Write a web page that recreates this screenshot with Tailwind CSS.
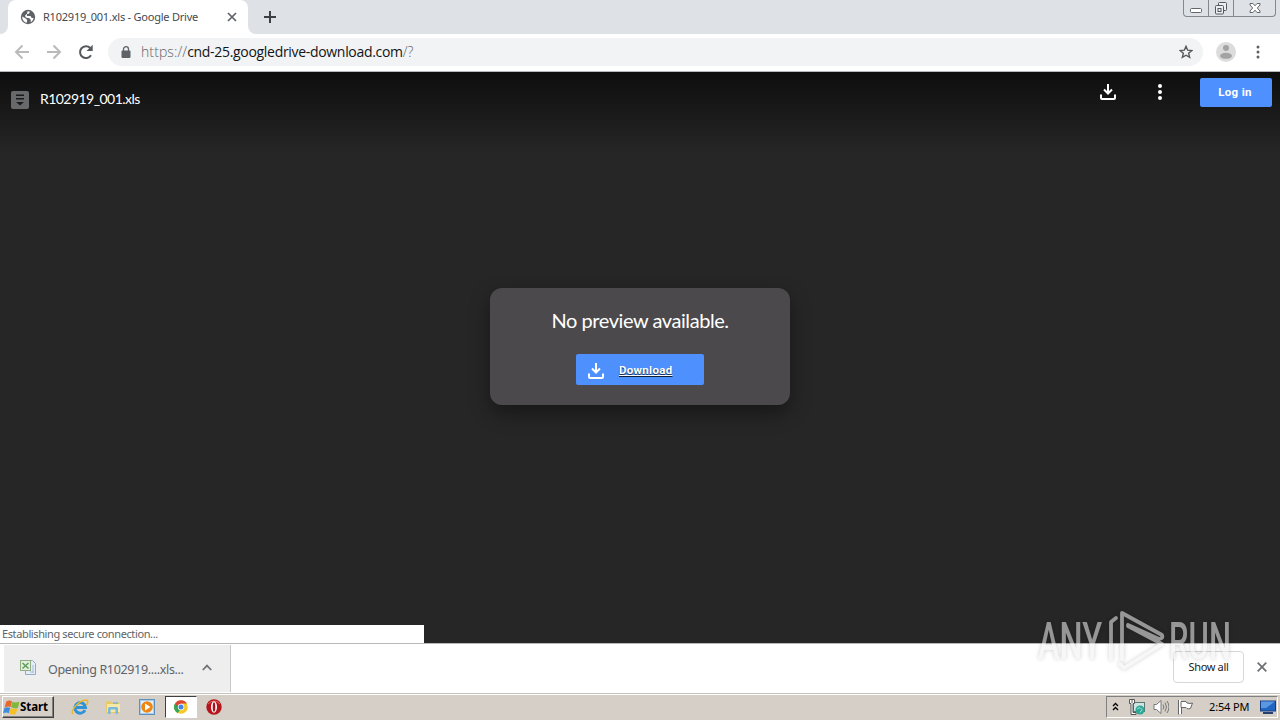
<!DOCTYPE html>
<html lang="en">
<head>
  <meta charset="UTF-8">
  <meta name="viewport" content="width=device-width, initial-scale=1.0">
  <title>R102919_001.xls - Google Drive</title>
  <script src="https://cdn.jsdelivr.net/npm/@tailwindcss/browser@4"></script>
</head>
<body class="relative w-[1280px] h-[720px] overflow-hidden flex flex-col bg-white font-['Noto_Sans',sans-serif] whitespace-nowrap">
  <!-- Tab strip -->
  <header class="h-[34px] bg-[#dee1e6] flex items-start">
    <div class="w-2 h-[34px] bg-white"><div class="h-full bg-[#dee1e6] rounded-br-lg"></div></div>
    <div class="w-60 h-[34px] bg-white rounded-t-lg flex items-center pl-3 pr-[11px]">
      <svg class="w-4 h-4" viewBox="0 0 16 16">
        <circle cx="8" cy="8" r="7.2" fill="#5f6368"/>
        <path d="M2.3 7.5 6 9.8l1.2 1.1-.5 2.8C4 13.2 2 10.7 2.3 7.5zM7.5 2.2l2.5.6-1 1.7-2 .8v1.6l3.5.2 1.2 1.8 1.9.2c-.3 1.8-1.4 3.3-3 4.1l.2-2.5-1.5-1.5-3.6-.7-.6-2 2-1.8z" fill="#fff"/>
      </svg>
      <span class="ml-[7px] text-[11px] tracking-[-0.22px] text-[#45494d]">R102919_001.xls - Google Drive</span>
      <svg class="w-[10px] h-[10px] ml-auto" viewBox="0 0 10 10" stroke="#5f6368" stroke-width="1.7"><path d="M1 1l8 8M9 1 1 9"/></svg>
    </div>
    <div class="w-2 h-[34px] bg-white"><div class="h-full bg-[#dee1e6] rounded-bl-lg"></div></div>
    <svg class="w-3 h-3 ml-2 mt-[11px]" viewBox="0 0 12 12" stroke="#3c4043" stroke-width="2"><path d="M6 0v12M0 6h12"/></svg>
    <!-- Window buttons -->
    <div class="ml-auto mr-1 w-[93px] h-[17px] border border-t-0 border-[#85888e] rounded-b flex">
      <div class="w-[25px] border-r border-[#85888e] flex justify-center"><svg class="w-3 h-4" viewBox="0 0 12 16"><rect x=".5" y="8.5" width="11" height="4" rx="1" fill="#fff" stroke="#63666b"/></svg></div>
      <div class="w-[25px] border-r border-[#85888e] flex justify-center"><svg class="w-[14px] h-4" viewBox="0 0 14 16" fill="#eceef1" stroke="#55585d"><rect x="4.5" y="2.5" width="8" height="8" rx="1"/><rect x="1.5" y="5.5" width="8" height="8.5" rx="1"/><rect x="4" y="8.5" width="3" height="3"/></svg></div>
      <div class="grow flex justify-center"><svg class="w-3 h-4" viewBox="0 0 12 16"><path d="M1 3.5h3l2 2.3 2-2.3h3v1.500L8.300 8l2.700 3v1.500H8L6 10.200 4 12.500H1V11l2.700-3L1 5z" fill="#fff" stroke="#63666b"/></svg></div>
    </div>
  </header>

  <!-- Address bar -->
  <nav class="h-[38px] bg-white border-b border-[#b5b7ba] flex items-center pl-[14px] pr-3">
    <svg class="w-4 h-4 -mt-0.5" viewBox="0 0 16 16" fill="none" stroke="#bababa" stroke-width="2"><path d="M15 8H2.500M8.500 1.500 2 8l6.500 6.500"/></svg>
    <svg class="w-4 h-4 ml-4 -mt-0.5" viewBox="0 0 16 16" fill="none" stroke="#bababa" stroke-width="2"><path d="M1 8h12.500M7.500 1.500 14 8l-6.500 6.500"/></svg>
    <svg class="w-4 h-4 ml-4 -mt-0.5" viewBox="0 0 16 16"><path d="M13 11.200A5.900 5.900 0 1 1 12.200 4" fill="none" stroke="#55585c" stroke-width="2"/><path d="M14.700.8v6.200H8.500z" fill="#55585c"/></svg>
    <div class="grow ml-[14px] h-7 -mt-0.5 bg-[#f1f3f4] rounded-full flex items-center pl-[13px] pr-[10px]">
      <svg class="w-[10px] h-3" viewBox="0 0 10 12"><rect x=".5" y="4.500" width="9" height="7.500" rx="1" fill="#5f6368"/><path d="M2.500 5V3.200a2.500 2.500 0 0 1 5 0V5" fill="none" stroke="#5f6368" stroke-width="1.300"/></svg>
      <span class="ml-[10px] text-[14px] font-['Open_Sans',sans-serif] font-light text-[#5f6468] tracking-[0.1px]">https://<span class="text-[#111418] font-normal tracking-[-0.31px]">cnd-25.googledrive-download.com</span>/?</span>
      <svg class="w-[14px] h-[14px] ml-auto" viewBox="0 0 14 14"><path d="M7 1.300l1.650 3.900 4.200.35-3.200 2.750 1 4.100L7 10.200l-3.650 2.200 1-4.100-3.200-2.750 4.200-.35z" fill="none" stroke="#55585c" stroke-width="1.400"/></svg>
    </div>
    <svg class="w-5 h-5 ml-[13px] -mt-0.5" viewBox="0 0 20 20"><circle cx="10" cy="10" r="10" fill="#dcdcdc"/><circle cx="10" cy="6" r="3" fill="#a3a3a3"/><ellipse cx="10" cy="13.800" rx="6" ry="3" fill="#a3a3a3"/></svg>
    <svg class="w-1 h-[14px] ml-[20px] mr-2 -mt-0.5" viewBox="0 0 4 14" fill="#5f6368"><circle cx="2" cy="2" r="1.500"/><circle cx="2" cy="7" r="1.500"/><circle cx="2" cy="12" r="1.500"/></svg>
  </nav>

  <!-- Drive viewer -->
  <main class="relative h-[571px] bg-[#262626] bg-linear-to-b from-[#0e0e0e] to-[#262626] to-[80px] text-white">
    <div class="flex items-start h-[216px] pl-[11px] pr-2">
      <svg class="w-[18px] h-[18px] mt-[19px]" viewBox="0 0 18 18"><rect width="18" height="18" rx="2" fill="#68696b"/><path d="M5 3.500h8v1.500H5zM5 7h8v1.500H5zM5 11h8l-4 3.500z" fill="#1a1a1a"/></svg>
      <span class="ml-[11px] mt-[17px] leading-5 text-[14px] font-['Lato',sans-serif] tracking-[-0.55px]">R102919_001.xls</span>
      <svg class="w-4 h-4 ml-auto mt-[12px]" viewBox="0 0 16 16" fill="none" stroke="#fff" stroke-width="2"><path d="M8 0v9M4 5.500l4 4 4-4M1 10.500V14q0 1 1 1h12q1 0 1-1v-3.500"/></svg>
      <svg class="w-1 h-4 ml-[42px] mt-[12px]" viewBox="0 0 4 16" fill="#fff"><circle cx="2" cy="2" r="2"/><circle cx="2" cy="8" r="2"/><circle cx="2" cy="14" r="2"/></svg>
      <a href="#" class="ml-[38px] mt-[6px] w-[72px] h-[29px] bg-[#4d90fe] rounded-xs flex items-center justify-center pr-0.5 text-[11.500px] tracking-[0.35px] font-bold font-['Roboto',sans-serif]">Log in</a>
    </div>
    <div class="mx-auto w-[300px] h-[117px] bg-[#4c494c] rounded-xl shadow-[0_8px_20px_rgba(0,0,0,0.4)] flex flex-col items-center">
      <h1 class="mt-[18px] leading-7 text-[20px] font-['Lato',sans-serif] tracking-[-0.43px]">No preview available.</h1>
      <a href="#" class="mt-5 w-32 h-[31px] bg-[#4d90fe] rounded-xs flex items-center pl-3">
        <svg class="w-4 h-4 mt-[3px]" viewBox="0 0 16 16" fill="none" stroke="#fff" stroke-width="2"><path d="M8 0v9M4 5.500l4 4 4-4M1 10.500V14q0 1 1 1h12q1 0 1-1v-3.500"/></svg>
        <span class="ml-[15px] mt-[3px] text-[11.500px] tracking-[0.3px] font-bold underline font-['Roboto',sans-serif] [text-shadow:0_1px_1px_rgba(0,0,0,0.8)]">Download</span>
      </a>
    </div>
    <div class="absolute left-0 bottom-0 w-[424px] h-[18px] bg-white text-[#606468] text-[11px] leading-[18px] pl-0.5 tracking-[-0.38px]">Establishing secure connection...</div>
  </main>

  <!-- Downloads shelf -->
  <section class="h-[50px] bg-white border-t border-[#b8b8b8] flex items-center">
    <div class="ml-1 w-[227px] h-[47px] bg-[#eeeeee] border-r border-[#c8c8c8] flex items-center pl-4 pr-[18px]">
      <svg class="w-4 h-4 mb-1" viewBox="0 0 16 16"><path d="M5.500 1.500h7l3 3v11h-10z" fill="#e5edf8" stroke="#9aa9c3"/><path d="M13 6v8M10 13h4" stroke="#a9bddb"/><rect x=".5" y="1.500" width="10" height="10" fill="#e3efde" stroke="#91ad86"/><path d="M2.500 4l6 5.500M8.500 4l-6 5.500" stroke="#5f9f5c" stroke-width="1.600"/></svg>
      <span class="ml-3 mt-1 text-[12.500px] text-[#5f6368] tracking-[-0.34px]">Opening R102919....xls...</span>
      <svg class="w-[10px] h-[7px] ml-auto mb-0.5" viewBox="0 0 10 7" fill="none" stroke="#6f7377" stroke-width="1.800"><path d="M.8 6 5 1.600 9.200 6"/></svg>
    </div>
    <a href="#" class="ml-auto w-[71px] h-8 mb-1 border border-[#d5d7da] rounded flex items-center justify-center pt-0.5 text-[11px] tracking-[-0.35px] text-[#222]">Show all</a>
    <svg class="w-[10px] h-[10px] ml-[13px] mr-[13px] mb-1" viewBox="0 0 10 10" stroke="#6b6f73" stroke-width="1.700"><path d="M.7.7l8.600 8.600M9.300.7.7 9.300"/></svg>
  </section>

  <!-- Taskbar -->
  <footer class="h-[27px] bg-[#d6cfc7] border-t border-[#c5c2bb] shadow-[inset_0_1px_0_#fff] flex items-center text-black">
    <div class="ml-0.5 w-[52px] h-[22px] bg-[#d6cfc7] border border-t-white border-l-white border-r-[#404040] border-b-[#404040] shadow-[inset_-1px_-1px_0_#808080] flex items-center">
      <svg class="w-[17px] h-[17px]" viewBox="0 0 16 16"><path d="M3 2.500q2.500-2 5.500-.5L7 7.500Q4.500 6.500 1.500 8z" fill="#e8672c"/><path d="M9 2.500q2.500 1.500 6.500 0L14 8.500Q11 9.500 7.500 7.500z" fill="#7eb83c"/><path d="M1.300 8.500q2.500-1.500 5.500-.3L5.500 13.500Q3 12 0 13.500z" fill="#3e8ddd"/><path d="M7.300 8.500q3 1.500 6.200.8L12 14q-3 1.500-6.200-.3z" fill="#f5bf26"/></svg>
      <span class="text-[11.500px] font-bold tracking-[-0.1px]">Start</span>
    </div>
    <svg class="w-[18px] h-[18px] ml-[17px]" viewBox="0 0 18 18" fill="none"><path d="M14 12.200A5.300 5.300 0 1 1 14.500 9.500H5" stroke="#2f93d8" stroke-width="3"/><path d="M2 16C-1 13 8 2 15 2c3 .3 1.500 3.500.5 5" stroke="#e7b928" stroke-width="1.500"/></svg>
    <svg class="w-4 h-4 ml-4" viewBox="0 0 16 16"><path d="M1 2.500h5l1.500 1.500H14v10H1z" fill="#e8c964"/><path d="M2 5h13v8H2z" fill="#f7e8a7"/><path d="M3 15V9.500q0-1.500 1.500-1.500h7Q13 8 13 9.500V15h-2.500v-4.500h-5V15z" fill="#78b9df"/><path d="M8 4h5" stroke="#5da5d1"/></svg>
    <svg class="w-4 h-4 ml-[18px]" viewBox="0 0 16 16"><rect x=".5" y=".5" width="15" height="15" fill="#a9cdea" stroke="#5b91bd"/><rect x="2" y="2" width="12" height="12" fill="#e4f1fa"/><circle cx="8" cy="8" r="5.800" fill="#ee8616"/><path d="M6 4.500 11.500 8 6 11.500z" fill="#fff"/></svg>
    <div class="ml-[10px] w-8 h-[22px] bg-white border border-t-[#404040] border-l-[#404040] border-r-white border-b-white flex items-center justify-center">
      <svg class="w-[14px] h-[14px]" viewBox="0 0 14 14"><circle cx="7" cy="7" r="6.800" fill="#f7c928"/><path d="M7 7 3.500 13A6.800 6.800 0 0 1 1.100 3.600z" fill="#36a653"/><path d="M1.100 3.600A6.800 6.800 0 0 1 12.900 3.600H7L4.500 8.500z" fill="#dc4437"/><path d="M1.100 3.600 4.200 9l1.500 1.500L3.500 13A6.800 6.800 0 0 1 1.100 3.600z" fill="#36a653"/><circle cx="7" cy="7" r="3.200" fill="#fff"/><circle cx="7" cy="7" r="2.500" fill="#4285e8"/></svg>
    </div>
    <svg class="w-4 h-4 ml-[9px]" viewBox="0 0 16 16"><circle cx="8" cy="8" r="7.700" fill="#b5161d"/><path d="M2 5q6-6 12 0" stroke="#df6a66" fill="none"/><ellipse cx="8" cy="8" rx="3" ry="5.700" fill="#fff"/><ellipse cx="8" cy="8" rx="1.300" ry="4.800" fill="#a5141a"/></svg>

    <!-- Tray -->
    <div class="ml-auto mr-0.5 w-[172px] h-[22px] border border-t-[#808080] border-l-[#808080] border-r-white border-b-white flex items-center">
      <svg class="w-[7px] h-[9px] ml-[5px] mb-0.5" viewBox="0 0 7 9" fill="none" stroke="#000" stroke-width="1.300"><path d="M1 4l2.500-2.500L6 4M1 8l2.500-2.500L6 8"/></svg>
      <svg class="w-4 h-4 ml-[10px]" viewBox="0 0 16 16"><rect x="4.500" y="3.500" width="11" height="9" fill="#cde5e3" stroke="#5e7473"/><path d="M.5.500h5v4h-1.500v9h3v2H2v-11H.5z" fill="#fff" stroke="#565656"/><path d="M3 0v4" stroke="#565656"/><circle cx="11" cy="11" r="4.500" fill="#2ca796"/><path d="M8 10l3-1.500 2 2-2 3" fill="none" stroke="#a7e7d7"/></svg>
      <svg class="w-4 h-4 ml-2" viewBox="0 0 16 16" fill="none" stroke="#777"><path d="M1 5.500h2.500L8 1.500v13L3.500 10.500H1z" fill="#fff"/><path d="M10 5.500q1.800 2.500 0 5M12 3.500q3 4.500 0 9M14 2q4 6 0 12"/></svg>
      <svg class="w-4 h-4 ml-2" viewBox="0 0 16 16"><path d="M1.500 1v14.500M4.500 9v6" stroke="#666"/><path d="M3 1v14" stroke="#fff" stroke-width="2"/><path d="M4 2.500h5l1 1.500q3 1 5.500 0l-2 5.500q-2 .8-3.500 0L9 8.500H4z" fill="#fff" stroke="#666"/></svg>
      <span class="ml-4 text-[11px] tracking-[-0.15px]">2:54 PM</span>
      <svg class="w-4 h-[14px] ml-auto mr-px" viewBox="0 0 16 14"><rect x=".5" y="1" width="15" height="10" fill="#2366c2" stroke="#173e83"/><path d="M1 1.500h14L6 8H1z" fill="#5a98e3"/><path d="M3 13h10" stroke="#253f71" stroke-width="2"/></svg>
    </div>
  </footer>

  <!-- Watermark -->
  <svg class="absolute left-[1036px] top-[606px] w-[200px] h-[70px] overflow-visible opacity-55 drop-shadow-[0_0_2px_rgba(0,0,0,0.35)]" viewBox="0 0 200 70" fill="none" stroke="#f2f2f2" stroke-width="3.800" stroke-linecap="round" stroke-linejoin="round">
    <g fill="#f2f2f2" stroke="none" font-family="Roboto, sans-serif" font-size="52" font-weight="500">
      <text x="2" y="53" textLength="64" lengthAdjust="spacingAndGlyphs">ANY</text>
      <text x="133" y="53" textLength="62" lengthAdjust="spacingAndGlyphs">RUN</text>
    </g>
    <path d="M80 12l-5 4v37M86 53V7l40 22q2 3-3 4L92 19M92 20l34 18-38 24-4-4"/>
  </svg>
</body>
</html>
